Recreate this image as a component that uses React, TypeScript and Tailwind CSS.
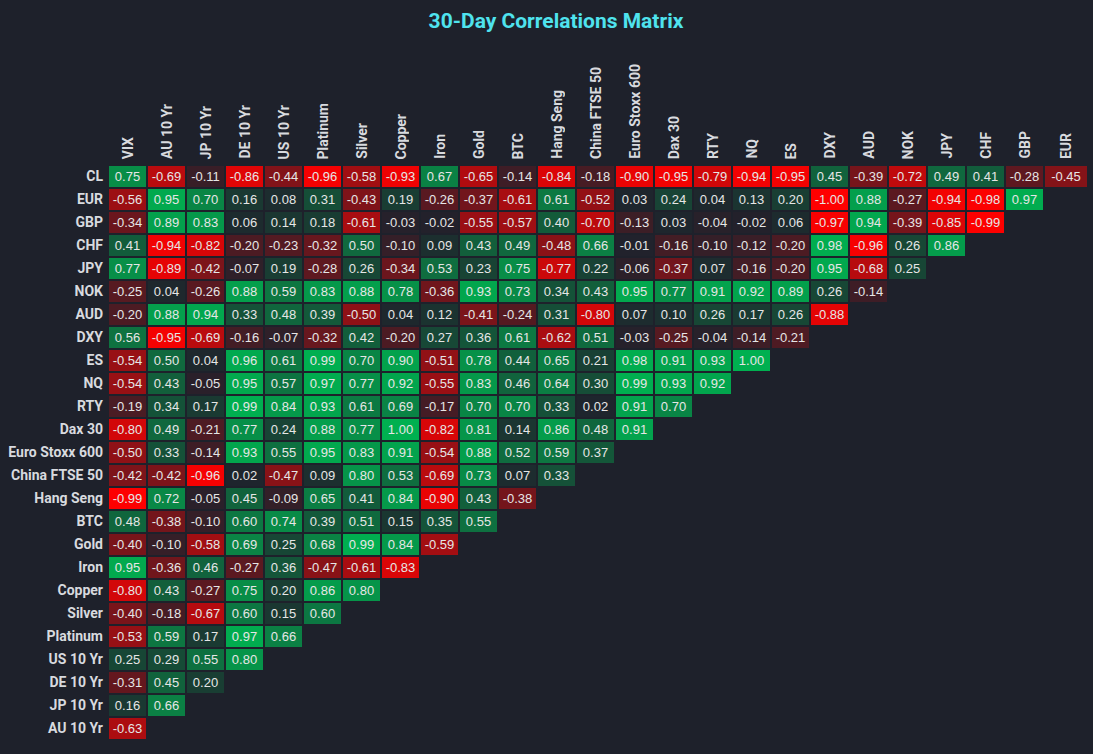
import { FC } from 'react'

const COLS = [
  'VIX', 'AU 10 Yr', 'JP 10 Yr', 'DE 10 Yr', 'US 10 Yr', 'Platinum', 'Silver', 'Copper', 'Iron', 'Gold',
  'BTC', 'Hang Seng', 'China FTSE 50', 'Euro Stoxx 600', 'Dax 30', 'RTY', 'NQ', 'ES', 'DXY', 'AUD',
  'NOK', 'JPY', 'CHF', 'GBP', 'EUR',
]

const ROWS: [string, number[]][] = [
  ['CL', [0.75, -0.69, -0.11, -0.86, -0.44, -0.96, -0.58, -0.93, 0.67, -0.65, -0.14, -0.84, -0.18, -0.9, -0.95, -0.79, -0.94, -0.95, 0.45, -0.39, -0.72, 0.49, 0.41, -0.28, -0.45]],
  ['EUR', [-0.56, 0.95, 0.7, 0.16, 0.08, 0.31, -0.43, 0.19, -0.26, -0.37, -0.61, 0.61, -0.52, 0.03, 0.24, 0.04, 0.13, 0.2, -1.0, 0.88, -0.27, -0.94, -0.98, 0.97]],
  ['GBP', [-0.34, 0.89, 0.83, 0.06, 0.14, 0.18, -0.61, -0.03, -0.02, -0.55, -0.57, 0.4, -0.7, -0.13, 0.03, -0.04, -0.02, 0.06, -0.97, 0.94, -0.39, -0.85, -0.99]],
  ['CHF', [0.41, -0.94, -0.82, -0.2, -0.23, -0.32, 0.5, -0.1, 0.09, 0.43, 0.49, -0.48, 0.66, -0.01, -0.16, -0.1, -0.12, -0.2, 0.98, -0.96, 0.26, 0.86]],
  ['JPY', [0.77, -0.89, -0.42, -0.07, 0.19, -0.28, 0.26, -0.34, 0.53, 0.23, 0.75, -0.77, 0.22, -0.06, -0.37, 0.07, -0.16, -0.2, 0.95, -0.68, 0.25]],
  ['NOK', [-0.25, 0.04, -0.26, 0.88, 0.59, 0.83, 0.88, 0.78, -0.36, 0.93, 0.73, 0.34, 0.43, 0.95, 0.77, 0.91, 0.92, 0.89, 0.26, -0.14]],
  ['AUD', [-0.2, 0.88, 0.94, 0.33, 0.48, 0.39, -0.5, 0.04, 0.12, -0.41, -0.24, 0.31, -0.8, 0.07, 0.1, 0.26, 0.17, 0.26, -0.88]],
  ['DXY', [0.56, -0.95, -0.69, -0.16, -0.07, -0.32, 0.42, -0.2, 0.27, 0.36, 0.61, -0.62, 0.51, -0.03, -0.25, -0.04, -0.14, -0.21]],
  ['ES', [-0.54, 0.5, 0.04, 0.96, 0.61, 0.99, 0.7, 0.9, -0.51, 0.78, 0.44, 0.65, 0.21, 0.98, 0.91, 0.93, 1.0]],
  ['NQ', [-0.54, 0.43, -0.05, 0.95, 0.57, 0.97, 0.77, 0.92, -0.55, 0.83, 0.46, 0.64, 0.3, 0.99, 0.93, 0.92]],
  ['RTY', [-0.19, 0.34, 0.17, 0.99, 0.84, 0.93, 0.61, 0.69, -0.17, 0.7, 0.7, 0.33, 0.02, 0.91, 0.7]],
  ['Dax 30', [-0.8, 0.49, -0.21, 0.77, 0.24, 0.88, 0.77, 1.0, -0.82, 0.81, 0.14, 0.86, 0.48, 0.91]],
  ['Euro Stoxx 600', [-0.5, 0.33, -0.14, 0.93, 0.55, 0.95, 0.83, 0.91, -0.54, 0.88, 0.52, 0.59, 0.37]],
  ['China FTSE 50', [-0.42, -0.42, -0.96, 0.02, -0.47, 0.09, 0.8, 0.53, -0.69, 0.73, 0.07, 0.33]],
  ['Hang Seng', [-0.99, 0.72, -0.05, 0.45, -0.09, 0.65, 0.41, 0.84, -0.9, 0.43, -0.38]],
  ['BTC', [0.48, -0.38, -0.1, 0.6, 0.74, 0.39, 0.51, 0.15, 0.35, 0.55]],
  ['Gold', [-0.4, -0.1, -0.58, 0.69, 0.25, 0.68, 0.99, 0.84, -0.59]],
  ['Iron', [0.95, -0.36, 0.46, -0.27, 0.36, -0.47, -0.61, -0.83]],
  ['Copper', [-0.8, 0.43, -0.27, 0.75, 0.2, 0.86, 0.8]],
  ['Silver', [-0.4, -0.18, -0.67, 0.6, 0.15, 0.6]],
  ['Platinum', [-0.53, 0.59, 0.17, 0.97, 0.66]],
  ['US 10 Yr', [0.25, 0.29, 0.55, 0.8]],
  ['DE 10 Yr', [-0.31, 0.45, 0.2]],
  ['JP 10 Yr', [0.16, 0.66]],
  ['AU 10 Yr', [-0.63]],
]

// dark base -> full red / full green
const BASE = [31, 34, 44]
const RED = [255, 0, 0]
const GREEN = [0, 176, 80]

const cellColor = (v: number) => {
  const target = v < 0 ? RED : GREEN
  const t = Math.min(Math.abs(v), 1)
  const c = BASE.map((b, i) => Math.round(b + (target[i] - b) * t))
  return `rgb(${c[0]}, ${c[1]}, ${c[2]})`
}

const Cell: FC<{ value: number }> = ({ value }) => (
  <div
    className="flex h-[21px] items-center justify-center text-[13px] text-[#e6e6e6] font-['Liberation_Sans',Arial,sans-serif]"
    style={{ backgroundColor: cellColor(value) }}
  >
    {value.toFixed(2)}
  </div>
)

const App: FC = () => {
  return (
    <div className="min-h-screen w-full bg-[#1e212b] pt-[9px] font-['Roboto','Liberation_Sans',sans-serif]">
      <h1 className="flex h-[24px] justify-center pl-[19px] text-[21px] leading-[24px] font-bold text-[#4fe3ee]">
        30-Day Correlations Matrix
      </h1>

      <div className="grid grid-cols-[107px_repeat(24,37px)_42px] grid-rows-[131px] auto-rows-[21px] gap-x-[2px] gap-y-[2px]">
        {/* 列标题 */}
        <div />
        {COLS.map(c => (
          <div key={c} className="flex items-end justify-center pb-[5px]">
            <span className="rotate-180 text-[14px] leading-[16px] font-bold whitespace-nowrap text-[#d8dadf] [writing-mode:vertical-rl]">
              {c}
            </span>
          </div>
        ))}

        {/* 行 */}
        {ROWS.map(([label, values]) => (
          <div key={label} className="contents">
            <div className="flex items-center justify-end pr-[4px] text-[14px] font-bold whitespace-nowrap text-[#d8dadf]">
              {label}
            </div>
            {COLS.map((c, i) =>
              i < values.length ? <Cell key={c} value={values[i]} /> : <div key={c} />,
            )}
          </div>
        ))}
      </div>
    </div>
  )
}

export default App
